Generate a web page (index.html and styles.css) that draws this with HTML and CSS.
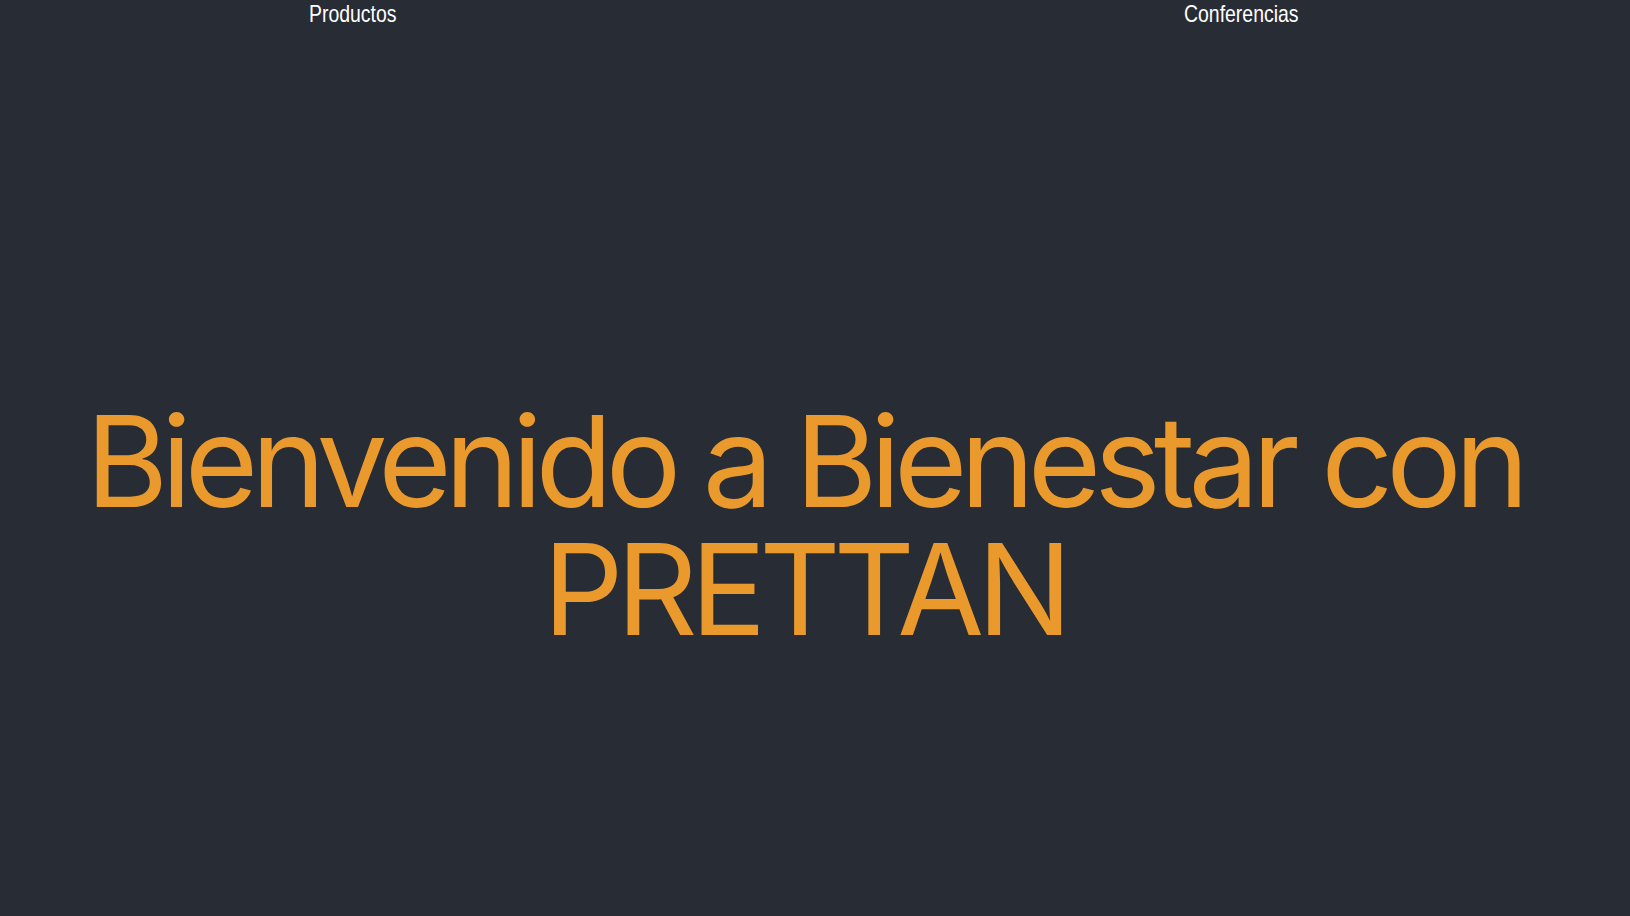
FILE: index.html
```html
<!DOCTYPE html>
<html lang="es">
<head>
<meta charset="utf-8">
<title>PRETTAN</title>
<link rel="stylesheet" href="styles.css">
</head>
<body>
<div class="app">
  <nav class="nav">
    <a class="nav-link" href="#"><span class="nav-text">Productos</span></a>
    <a class="nav-link" href="#"><span class="nav-text">Conferencias</span></a>
  </nav>
  <main class="hero">
    <h1 class="hero-title">Bienvenido a Bienestar con<br>PRETTAN</h1>
  </main>
</div>
</body>
</html>
```
FILE: styles.css
```css
html, body {
  margin: 0;
  padding: 0;
  background: #282c34;
}
.app {
  min-height: 916px;
  background: #282c34;
  display: flex;
  flex-direction: column;
}
.nav {
  display: grid;
  grid-template-columns: 875px auto;
  padding-left: 309px;
}
.nav-link {
  font-family: "Liberation Sans", Arial, sans-serif;
  font-size: 24px;
  line-height: 28px;
  color: #ffffff;
  text-decoration: none;
}
.nav-text {
  display: inline-block;
  transform: scaleX(0.81);
  transform-origin: left center;
}
.hero {
  display: flex;
  justify-content: center;
  padding-top: 369px;
  padding-right: 22px;
}
.hero-title {
  margin: 0;
  width: 1600px;
  text-align: center;
  font-family: Inter, "Noto Sans", sans-serif;
  font-weight: 400;
  font-size: 126px;
  line-height: 128px;
  letter-spacing: -7px;
  color: #ea9a2c;
}
```
